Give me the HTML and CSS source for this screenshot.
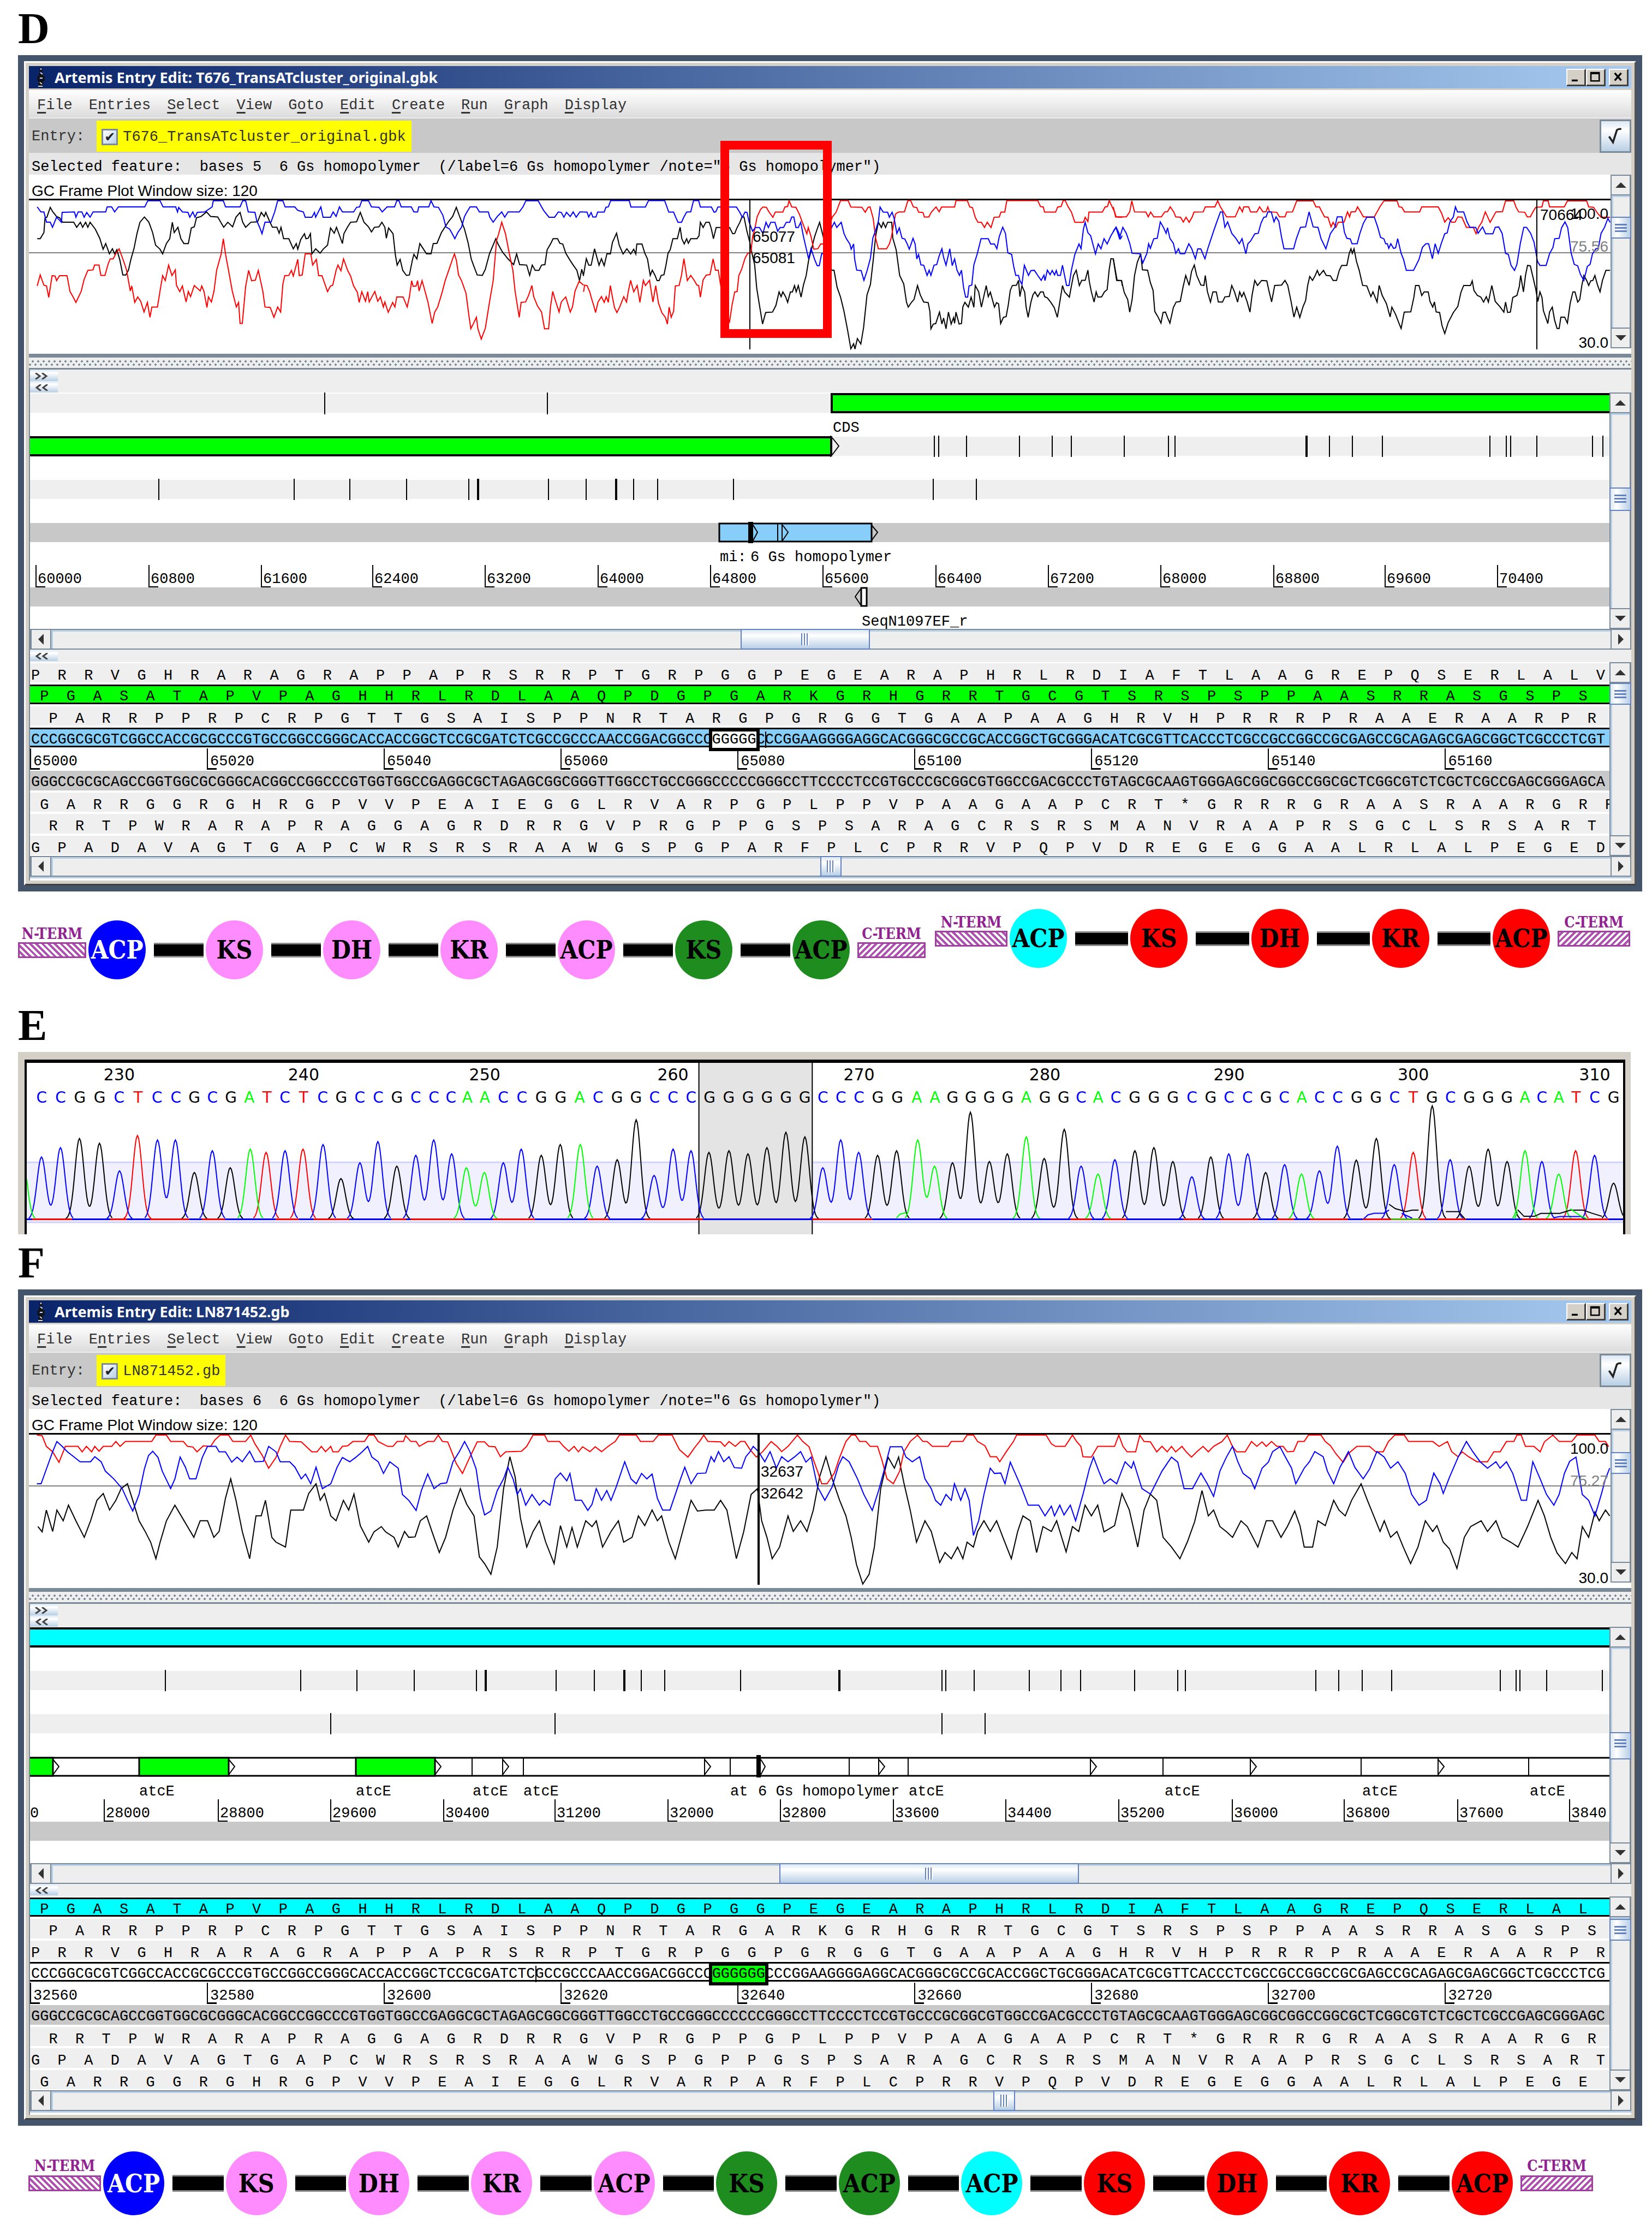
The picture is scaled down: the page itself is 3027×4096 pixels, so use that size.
FILE: index.html
```html
<!DOCTYPE html>
<html lang="en">
<head>
<meta charset="utf-8">
<title>Homopolymer comparison: T676 and LN871452</title>
<link rel="stylesheet" href="styles.css">
</head>
<body>
<svg width="0" height="0" class="defs" aria-hidden="true">
  <defs>
    <symbol id="helix" viewBox="0 0 16 36"><path d="M8 0v6M5 6h6M4 11l8 6M12 11l-8 6M3 17h10v6H3zM4 23l8 7M12 23l-8 7M3 31h8M5 35h6" fill="none" stroke="#111" stroke-width="3"/><path d="M8 1v3M7 9l4 3M6 19h5M6 27l4 3M3 34h8" fill="none" stroke="#ddd" stroke-width="2"/></symbol>
    <symbol id="up" viewBox="0 0 20 10"><path d="M0 10 10 0l10 10z" fill="#333"/></symbol>
    <symbol id="down" viewBox="0 0 20 10"><path d="M0 0h20L10 10z" fill="#333"/></symbol>
    <symbol id="left" viewBox="0 0 10 20"><path d="M10 0v20L0 10z" fill="#333"/></symbol>
    <symbol id="right" viewBox="0 0 10 20"><path d="M0 0v20l10-10z" fill="#333"/></symbol>
    <symbol id="more" viewBox="0 0 24 12"><path d="M1 0l8 6-8 6M13 0l8 6-8 6" fill="none" stroke="#444" stroke-width="3"/></symbol>
    <symbol id="less" viewBox="0 0 24 12"><path d="M11 0L3 6l8 6M23 0l-8 6 8 6" fill="none" stroke="#444" stroke-width="3"/></symbol>
  </defs>
</svg>
<main class="page">
<h2>D</h2>
<section class="win">
  <div class="frame">
    <header class="title">
      <svg class="helix"><use href="#helix"/></svg>
      <h3>Artemis Entry Edit: T676_TransATcluster_original.gbk</h3>
      <div class="winbtns">
        <button aria-label="Minimize"><svg viewBox="0 0 36 32"><path d="M9 23h13" stroke="#000" stroke-width="4"/></svg></button>
        <button aria-label="Maximize"><svg viewBox="0 0 36 32"><path d="M8 6h18v18H8z M8 8h18" fill="none" stroke="#000" stroke-width="3"/></svg></button>
        <button aria-label="Close"><svg viewBox="0 0 36 32"><path d="M10 7l14 16M24 7L10 23" stroke="#000" stroke-width="4"/></svg></button>
      </div>
    </header>
    <nav class="menu">
      <a href="#"><u>F</u>ile</a><a href="#">E<u>n</u>tries</a><a href="#"><u>S</u>elect</a><a href="#"><u>V</u>iew</a><a href="#">G<u>o</u>to</a><a href="#"><u>E</u>dit</a><a href="#"><u>C</u>reate</a><a href="#"><u>R</u>un</a><a href="#"><u>G</u>raph</a><a href="#"><u>D</u>isplay</a>
    </nav>
    <div class="entry">
      <span class="entry-label">Entry:</span>
      <label class="file"><input type="checkbox" checked>T676_TransATcluster_original.gbk</label>
      <button class="apply" aria-label="Apply"><svg viewBox="0 0 58 61"><path d="M16 31l8 12L32 18q3-3 9-2" fill="none" stroke="#222" stroke-width="4"/></svg></button>
    </div>
    <p class="selected">Selected feature:  bases 5  6 Gs homopolymer  (/label=6 Gs homopolymer /note="6 Gs homopolymer")</p>
    <div class="pane white">
      <svg class="plot" viewBox="0 0 2898 328">
        <text x="5" y="39">GC Frame Plot Window size: 120</text>
        <path class="mean" d="M0 143H2898"/>
        <path class="top" d="M0 45.500H2898"/>
        <g transform="matrix(.682 0 0 .4197 -53 -320)">
          <polyline class="k" points="100,1042 108,1042 118,1015 121,950 126,948 135,905 142,925 152,945 160,950 168,970 198,970 206,992 216,970 222,992 230,970 236,992 242,970 256,1000 268,1040 277,1088 284,1063 294,1108 302,1086 308,1108 314,1090 322,1135 330,1200 338,1200 345,1180 352,1130 360,1085 368,1020 376,970 388,947 400,970 410,1015 418,1070 430,1088 437,1108 447,1063 456,1042 463,970 468,1015 478,992 486,1042 494,1063 506,1063 514,995 522,990 528,950 540,945 555,925 566,945 585,947 593,970 601,992 612,970 625,990 634,948 645,927 652,970 660,992 674,970 692,968 702,927 710,945 714,927 724,965 732,992 744,992 750,1018 755,992 762,1042 776,1042 788,1086 796,1063 800,1088 808,1045 818,1020 822,1042 828,1040 834,1020 838,1108 848,1086 860,1105 868,1088 880,1070 888,995 898,1018 904,992 910,1018 920,1063 924,1020 934,990 942,970 958,968 968,927 978,970 990,990 998,1012 1006,992 1018,990 1026,970 1034,992 1038,1040 1044,995 1056,1020 1062,1110 1067,1157 1075,1132 1082,1180 1092,1202 1100,1200 1108,1135 1112,1110 1120,1130 1128,1063 1138,1088 1146,1108 1158,1108 1164,1063 1174,1062 1186,1015 1196,990 1206,965 1216,945 1226,905 1236,950 1248,1000 1258,1062 1266,1130 1272,1157 1282,1200 1296,1202 1304,1175 1315,1108 1332,1042 1338,1065 1350,1100 1365,1130 1380,1155 1388,1108 1396,1155 1415,1157 1423,1202 1430,1157 1438,1180 1448,1180 1455,1157 1464,1155 1470,1090 1480,1062 1486,1042 1498,1042 1504,1062 1512,1065 1520,1105 1530,1132 1540,1157 1550,1180 1557,1225 1563,1175 1568,1205"/>
          <polyline class="r" points="100,1248 108,1200 118,1245 125,1248 131,1298 140,1203 148,1205 152,1225 160,1203 180,1203 188,1272 196,1295 204,1320 218,1272 226,1220 236,1180 250,1178 254,1157 266,1157 271,1202 282,1202 290,1155 296,1130 304,1130 312,1105 320,1086 330,1130 340,1178 350,1270 354,1248 362,1320 370,1296 378,1315 387,1362 396,1320 403,1385 408,1340 423,1340 432,1250 437,1203 444,1225 453,1157 462,1203 471,1178 474,1245 483,1273 490,1248 500,1318 506,1272 512,1295 522,1246 538,1270 542,1248 548,1272 556,1342 560,1296 568,1318 575,1270 582,1180 594,1110 600,1042 606,1110 614,1180 624,1270 635,1340 641,1320 645,1412 651,1412 660,1250 668,1180 676,1225 686,1223 694,1180 700,1225 706,1270 712,1340 726,1342 736,1385 746,1340 754,1362 760,1240 765,1203 776,1202 783,1180 788,1205 800,1132 804,1203 812,1200 820,1108 835,1108 840,1157 850,1132 856,1203 865,1203 880,1273 888,1248 894,1245 903,1180 908,1157 916,1182 923,1130 934,1180 942,1205 950,1248 960,1275 965,1320 972,1273 982,1315 988,1273 992,1318 1007,1272 1015,1315 1022,1296 1030,1340 1034,1318 1043,1363 1055,1320 1061,1340 1066,1296 1083,1296 1094,1340 1100,1295 1106,1225 1110,1250 1118,1248 1122,1225 1126,1270 1134,1225 1142,1272 1150,1320 1161,1412 1168,1362 1176,1340 1188,1275 1196,1225 1206,1178 1216,1130 1221,1108 1226,1135 1232,1200 1240,1225 1252,1280 1260,1380 1265,1435 1272,1412 1280,1385 1284,1435 1293,1480 1304,1432 1315,1320 1325,1225 1334,1050 1340,1020 1348,970 1358,1020 1370,1120 1378,1180 1384,1272 1395,1385 1400,1320 1412,1318 1420,1290 1429,1246 1434,1295 1444,1335 1455,1362 1463,1435 1474,1435 1479,1340 1485,1272 1490,1300 1502,1362 1508,1318 1520,1296 1532,1362 1538,1340 1545,1270 1556,1228 1568,1245"/>
          <polyline class="b" points="100,903 110,925 118,925 125,970 135,970 141,992 152,948 165,970 167,927 200,925 204,948 210,925 220,925 226,948 233,927 242,948 250,925 284,925 288,903 300,903 308,925 318,903 389,903 397,876 430,876 438,903 472,903 477,925 480,905 490,925 505,927 510,948 518,925 524,948 530,927 550,925 570,903 573,876 600,876 606,903 645,903 652,876 660,876 667,925 685,927 690,965 697,990 704,1020 712,970 728,970 738,925 746,876 760,876 766,903 792,903 800,918 815,925 820,948 838,948 845,927 848,948 862,903 868,948 888,948 895,925 903,945 912,903 920,925 950,925 958,905 966,903 972,876 990,876 998,903 1018,905 1027,925 1040,903 1060,903 1066,876 1072,876 1078,903 1105,903 1112,925 1122,925 1125,903 1152,903 1158,876 1166,903 1178,905 1190,940 1198,990 1208,1000 1215,1020 1222,1042 1230,1015 1240,992 1248,945 1254,927 1263,903 1280,903 1288,925 1312,925 1316,948 1325,970 1336,945 1348,925 1356,948 1365,925 1395,925 1405,903 1413,876 1446,876 1455,903 1462,922 1475,948 1490,948 1500,925 1508,927 1515,948 1522,927 1532,945 1540,925 1548,948 1558,925 1568,925"/>
        </g>
        <g transform="matrix(.6295 0 0 .27418 1016.300 -89.700)">
          <polyline class="k" points="0,995 8,888 15,932 22,932 32,822 45,932 52,888 60,935 68,855 78,857 84,780 96,718 104,800 115,857 126,822 137,857 146,825 152,857 155,790 170,790 178,850 186,890 194,1000 200,965 208,1000 214,1035 220,1035 226,1000 234,995 240,930 246,850 252,830 260,755 273,755 281,678 286,755 293,790 300,755 305,785 312,755 330,755 336,735 340,645 348,680 356,645 366,645 372,690 378,755 386,680 425,680 434,722 440,720 446,685 455,645 461,610 467,610 475,700 484,780 490,850 498,930 504,1085 512,1200 521,1325 530,1248 550,1245 560,1200 569,1110 575,1142 580,1110 588,1142 594,1180 602,1110 608,1110 614,1068 619,1110 625,1068 633,1145 640,1065 648,1000 655,900 664,820 672,745 680,690 687,645 693,700 722,965 729,965 738,1080 748,1145 758,1240 768,1360 778,1490 786,1457 790,1492 797,1422 807,1458 815,1350 825,1130 835,1060 843,900 850,740 858,645 867,680 872,645 879,680 885,645 897,645 900,750 910,830 920,1000 932,1058 940,1180 945,1212 955,1178 962,1160 972,1068 980,1130 990,1178 1003,1182 1008,1240 1011,1357 1018,1325 1025,1322 1036,1245 1043,1325 1048,1285 1055,1357 1062,1245 1070,1325 1077,1282 1080,1320 1084,1245 1093,1325 1100,1322 1104,1210 1110,1180 1120,1212 1128,1145 1136,1213 1140,1068 1150,1110 1158,1212 1172,1068 1178,1142 1184,1112 1196,1212 1202,1182 1208,1190 1214,1322 1222,1280 1230,1275 1236,1200 1242,1100 1248,1068 1260,1066 1266,1033 1270,1142 1276,1070 1284,1112 1288,1210 1294,1280 1302,1180 1308,1130 1314,1110 1322,1142 1330,1110 1338,1110 1342,1142 1350,1150 1360,1180 1370,1215 1379,1280 1386,1180 1394,1068 1400,1110 1414,1145 1420,1070 1426,1000 1434,965 1443,1068 1450,1033 1460,1033 1468,965 1472,1040 1478,1110 1486,1178 1492,1110 1497,1145 1508,1143 1516,1110 1524,1095 1530,960 1535,888 1542,890 1548,970 1553,1033 1566,1035 1568,1068"/>
          <polyline class="r" points="0,1110 3,1065 10,1068 18,1110 22,1145 30,1205 35,1248 42,1178 52,1142 60,1180 66,1142 72,1180 78,1068 84,1145 90,1215 97,1248 105,1212 117,1142 125,1178 130,1110 137,1033 146,1110 156,1068 164,1180 174,1033 180,1068 192,1033 202,1178 210,1068 218,1185 228,1250 238,1280 244,1325 249,1212 255,1280 262,1240 267,1070 278,1068 285,1000 292,888 302,1035 312,1000 322,1033 330,1065 335,1068 340,1145 348,1030 357,998 368,995 377,890 384,965 392,965 400,1080 404,1200 425,1310 432,1200 440,1110 447,1108 452,1000 460,960 470,885 478,852 487,850 492,740 498,695 505,610 515,560 522,543 532,545 540,577 551,612 558,577 580,577 586,543 594,540 598,500 606,543 618,545 628,590 640,665 650,722 654,680 662,740 670,825 682,822 690,790 698,790 724,610 735,578 748,500 770,500 778,543 810,545 820,578 828,545 834,543 843,620 850,750 858,822 882,822 890,790 896,745 903,650 908,590 916,577 934,575 944,500 952,500 960,543 970,547 975,577 988,580 992,610 1005,610 1012,578 1026,543 1035,575 1042,543 1080,543 1084,500 1117,500 1124,543 1132,547 1140,612 1148,645 1158,645 1167,680 1175,645 1186,680 1195,612 1210,610 1215,577 1226,577 1232,500 1322,500 1330,540 1338,543 1342,577 1374,577 1380,543 1390,540 1396,500 1402,500 1410,540 1420,577 1430,645 1455,645 1460,612 1468,640 1471,577 1510,577 1518,543 1525,540 1530,500 1538,540 1546,577 1550,610 1568,612"/>
          <polyline class="b" points="0,577 10,577 15,610 22,580 27,610 36,610 41,577 60,577 65,545 72,542 79,500 133,500 138,543 180,543 189,500 236,500 248,577 262,577 268,610 275,645 285,645 292,610 300,577 312,575 320,500 335,500 340,543 372,543 380,578 385,575 391,543 445,543 455,580 462,612 470,577 476,580 482,645 492,705 500,680 512,680 522,720 531,645 538,680 545,645 557,645 565,705 572,680 582,680 590,645 600,645 606,610 612,610 618,680 625,680 632,645 640,740 648,820 655,890 662,820 672,890 680,935 686,935 693,855 700,853 722,680 730,645 737,680 750,645 758,720 765,755 775,790 779,825 786,790 789,890 795,965 808,968 816,1033 825,970 835,885 842,750 850,700 858,640 863,543 872,577 885,578 890,612 898,578 904,620 912,720 919,682 927,752 935,757 942,790 948,825 955,780 959,752 965,790 970,890 975,860 982,930 990,932 1000,1000 1006,965 1011,1000 1020,932 1028,928 1035,870 1043,822 1048,880 1055,932 1066,822 1073,935 1080,890 1087,965 1094,1000 1100,965 1106,1080 1112,1145 1118,1145 1122,1070 1130,1065 1136,930 1146,855 1157,755 1178,755 1185,790 1196,790 1203,822 1210,740 1220,678 1228,720 1235,850 1246,860 1252,940 1258,1000 1266,1000 1270,1035 1276,1060 1283,932 1295,1000 1302,968 1312,966 1322,1000 1332,1033 1340,998 1343,1035 1350,965 1358,995 1364,967 1371,997 1376,967 1380,1000 1388,1000 1394,932 1400,1000 1406,1068 1413,1068 1420,965 1430,860 1442,790 1448,822 1455,690 1460,645 1468,715 1476,735 1490,857 1498,790 1506,822 1515,755 1524,790 1535,735 1550,678 1558,715 1563,755 1568,735"/>
        </g>
        <g transform="matrix(.6295 0 0 .3672 1986.800 -237.750)">
          <polyline class="k" points="0,1065 5,1120 10,1175 24,1175 32,1235 42,1270 48,1333 55,1270 62,1150 70,1085 80,1042 85,1122 100,1124 108,1185 116,1225 121,1330 130,1356 139,1388 145,1335 152,1333 158,1360 165,1388 175,1310 183,1283 195,1280 203,1210 211,1150 216,1175 221,1200 228,1130 236,1098 243,1150 255,1198 264,1200 268,1150 274,1230 283,1283 290,1232 300,1232 306,1283 318,1283 325,1257 338,1255 345,1200 353,1232 362,1283 368,1232 374,1257 380,1235 390,1283 398,1333 404,1250 412,1175 420,1200 432,1175 447,1177 453,1225 461,1282 470,1200 490,1198 500,1175 508,1200 518,1283 526,1358 534,1308 543,1360 552,1308 560,1275 566,1200 572,1155 580,1175 588,1150 594,1125 600,1150 612,1125 620,1150 632,1152 640,1175 650,1175 658,1125 665,1100 680,1100 687,1040 692,1017 696,1040 701,1017 708,1080 716,1125 726,1200 738,1202 750,1256 756,1232 768,1283 774,1200 783,1250 795,1290 806,1357 811,1308 822,1345 832,1390 838,1415 847,1333 866,1332 875,1260 880,1200 890,1200 898,1250 905,1232 917,1232 922,1280 930,1308 935,1282 940,1332 950,1335 957,1400 965,1440 975,1385 990,1335 1003,1305 1012,1235 1020,1200 1040,1200 1045,1177 1050,1225 1060,1250 1070,1258 1078,1283 1086,1256 1092,1283 1102,1200 1112,1280 1125,1305 1137,1333 1142,1283 1148,1335 1156,1333 1163,1260 1175,1250 1182,1205 1186,1150 1194,1232 1200,1150 1206,1100 1214,1102 1222,1160 1230,1220 1236,1280 1242,1232 1248,1260 1252,1325 1265,1390 1270,1332 1278,1308 1285,1375 1292,1415 1298,1415 1303,1358 1314,1358 1322,1388 1330,1290 1338,1232 1344,1232 1352,1283 1358,1270 1364,1200 1370,1150 1378,1175 1384,1200 1390,1177 1396,1175 1402,1150 1410,1200 1417,1232 1424,1175 1434,1125 1446,1125"/>
          <polyline class="r" points="0,808 7,858 38,858 48,833 54,778 62,833 95,834 102,858 109,834 118,858 140,858 150,833 158,832 166,808 176,833 182,858 196,860 204,884 212,860 221,885 230,858 235,834 262,833 268,808 296,808 304,778 312,808 320,830 330,858 355,858 368,808 376,833 380,808 394,808 400,833 418,833 426,808 436,833 445,832 450,808 455,833 476,835 484,858 500,858 505,834 522,833 534,778 582,778 590,808 600,808 615,858 625,860 634,908 640,885 648,910 655,885 672,884 682,833 688,858 692,833 705,832 711,808 720,833 728,858 760,858 768,833 776,808 788,778 826,778 832,808 840,810 848,833 892,833 898,808 946,808 956,840 965,884 975,862 985,885 995,884 1003,858 1015,860 1028,910 1048,910 1056,942 1064,908 1073,884 1083,833 1090,858 1097,885 1106,858 1114,833 1133,832 1142,778 1166,778 1172,808 1180,833 1198,835 1205,858 1214,858 1222,832 1230,810 1248,808 1252,778 1266,778 1270,808 1313,808 1322,778 1378,778 1384,808 1398,810 1410,840 1420,860 1446,860"/>
          <polyline class="b" points="0,930 8,910 18,965 28,910 38,940 48,990 55,1040 78,1042 86,1088 98,1040 103,992 108,1015 118,967 128,965 137,883 146,910 154,940 158,912 165,965 175,990 182,1040 190,1017 195,1042 208,1042 220,992 228,1015 239,1067 246,1017 255,1018 267,1067 275,1018 290,940 300,890 312,833 318,833 325,910 333,883 345,940 357,965 367,992 375,967 386,1042 392,992 400,978 412,942 422,940 430,890 438,860 445,858 450,833 460,833 468,883 474,858 482,880 490,960 497,1017 525,1017 533,967 545,910 560,908 570,833 582,908 596,910 605,967 619,1017 632,942 645,910 652,858 666,858 673,935 680,965 690,968 695,992 710,992 718,940 728,890 738,860 760,860 770,910 778,960 788,968 793,992 798,992 802,1015 808,992 816,1015 822,1012 828,967 838,1040 845,1070 853,1125 874,1125 882,1098 890,1070 900,1010 910,992 918,992 929,1067 937,992 946,1040 955,990 965,942 972,938 980,883 990,858 996,808 1002,833 1020,833 1030,883 1038,910 1055,910 1062,940 1075,908 1084,942 1105,942 1112,910 1122,908 1132,940 1142,1040 1150,1045 1158,1100 1168,1125 1175,1095 1185,990 1195,910 1203,910 1215,940 1225,985 1235,1080 1242,1100 1260,1100 1270,1042 1280,1010 1285,967 1298,965 1305,912 1315,883 1323,912 1333,1040 1342,1095 1352,1102 1360,1145 1370,1175 1380,1105 1388,1095 1395,1042 1405,1017 1412,1015 1420,940 1430,910 1440,865 1446,885"/>
        </g>
        <path class="cursor" d="M1321 47V320M2763 47V320"/>
        <text x="1326" y="123">65077</text><text x="1326" y="162">65081</text><text x="2769" y="83">70664</text>
        <text class="end" x="2894" y="81">100.0</text><text class="end dim" x="2894" y="141">75.56</text><text class="end" x="2894" y="317">30.0</text>
      </svg>
      <div class="vbar"><button aria-label="Up"><svg><use href="#up"/></svg></button><div class="track"><i style="top:16%;height:40px"></i></div><button aria-label="Down"><svg><use href="#down"/></svg></button></div>
    </div>
    <div class="split"></div>
    <div class="body">
      <div class="strip"><button aria-label="Expand"><svg><use href="#more"/></svg></button><button aria-label="Collapse"><svg><use href="#less"/></svg></button></div>
      <div class="pane">
        <svg class="genes" viewBox="0 0 2894 433">
          <path class="band" d="M0 2h2894v35H0zM0 81h2894v35H0zM0 160h2894v35H0z"/>
          <path class="strand" d="M0 239h2894v35H0zM0 357h2894v35H0z"/>
          <path class="stop" d="M540 0v40M948 0v40M1657 79v39M1665 79v39M1716 79v39M1813 79v39M1873 79v39M1908 79v39M2005 79v39M2086 79v39M2098 79v39M2338 79v39M2340 79v39M2381 79v39M2423 79v39M2478 79v39M2675 79v39M2705 79v39M2713 79v39M2761 79v39M2863 79v39M2882 79v39M236 158v39M484 158v39M586 158v39M690 158v39M804 158v39M820 158v39M822 158v39M950 158v39M1019 158v39M1073 158v39M1075 158v39M1106 158v39M1150 158v39M1289 158v39M1655 158v39M1734 158v39"/>
          <path class="cds" d="M1469 3h1430v33h-1430zM-5 82h1473v33H-5z"/>
          <path class="arrow" d="M1467 79v39M1470 83l12 15-12 16"/>
          <path class="misc" d="M1263 240h279v33h-279z"/>
          <path class="arrow" d="M1370 240v33M1378 240v33M1325 243l8 13-8 15M1379 243l10 13-10 15M1542 243l11 13-11 15"/>
          <path class="pick" d="M1316 237h9v39h-9z"/>
          <path class="primer" d="M1523 358h10v33h-10z"/><path class="arrow" d="M1522 360l-10 14 10 15"/>
          <text x="1471" y="72">CDS</text><text x="1264" y="309">mi:</text><text x="1320" y="309">6 Gs homopolymer</text><text x="1524" y="427">SeqN1097EF_r</text>
          <path class="scale" d="M11 316v40h17M218 316v40h17M424 316v40h17M628 316v40h17M834 316v40h17M1041 316v40h17M1247 316v40h17M1453 316v40h17M1660 316v40h17M1866 316v40h17M2072 316v40h17M2279 316v40h17M2483 316v40h17M2689 316v40h17"/>
          <g><text x="14" y="349">60000</text><text x="221" y="349">60800</text><text x="427" y="349">61600</text><text x="631" y="349">62400</text><text x="837" y="349">63200</text><text x="1044" y="349">64000</text><text x="1250" y="349">64800</text><text x="1456" y="349">65600</text><text x="1663" y="349">66400</text><text x="1869" y="349">67200</text><text x="2075" y="349">68000</text><text x="2282" y="349">68800</text><text x="2486" y="349">69600</text><text x="2692" y="349">70400</text></g>
        </svg>
        <div class="vbar"><button aria-label="Up"><svg><use href="#up"/></svg></button><div class="track"><i style="top:38%;height:43px"></i></div><button aria-label="Down"><svg><use href="#down"/></svg></button></div>
      </div>
      <div class="hbar"><button aria-label="Left"><svg><use href="#left"/></svg></button><div class="track"><i style="left:44.200%;width:8.300%"></i></div><button aria-label="Right"><svg><use href="#right"/></svg></button></div>
      <div class="strip one"><button aria-label="Collapse"><svg><use href="#less"/></svg></button></div>
      <div class="pane">
        <div class="seq">
          <p class="aa">PRRVGHRARAGRAPPAPRSRRPTGRPGGPEGEARAPHRLRDIAFTLAAGREPQSERLALV</p>
          <p class="aa f1 green">PGASATAPVPAGHHRLRDLAAQPDGPGARKGRHGRRTGCGTSRSPSPPAASRRASGSPS</p>
          <p class="aa f2">PARRPPRPCRPGTTGSAISPPNRTARGPGRGGTGAAPAAGHRVHPRRRPRAAERAARPR</p>
          <p class="dna sky">CCCGGCGCGTCGGCCACCGCGCCCGTGCCGGCCGGGCACCACCGGCTCCGCGATCTCGCCGCCCAACCGGACGGCCC<mark>GGGGG</mark><b class="edge">C</b><b class="edge">C</b>CGGAAGGGGAGGCACGGGCGCCGCACCGGCTGCGGGACATCGCGTTCACCCTCGCCGCCGGCCGCGAGCCGCAGAGCGAGCGGCTCGCCCTCGT</p>
          <div class="ruler"><span>65000</span><span>65020</span><span>65040</span><span>65060</span><span>65080</span><span>65100</span><span>65120</span><span>65140</span><span>65160</span></div>
          <p class="dna comp">GGGCCGCGCAGCCGGTGGCGCGGGCACGGCCGGCCCGTGGTGGCCGAGGCGCTAGAGCGGCGGGTTGGCCTGCCGGGCCCCCGGGCCTTCCCCTCCGTGCCCGCGGCGTGGCCGACGCCCTGTAGCGCAAGTGGGAGCGGCGGCCGGCGCTCGGCGTCTCGCTCGCCGAGCGGGAGCA</p>
          <p class="aa f1">GARRGGRGHRGPVVPEAIEGGLRVARPGPLPPVPAAGAAPCRT*GRRRGRAASRAARGRR</p>
          <p class="aa f2">RRTPWRARAPRAGGAGRDRRGVPRGPPGSPSARAGCRSRSMANVRAAPRSGCLSRSART</p>
          <p class="aa">GPADAVAGTGAPCWRSRSRAAWGSPGPARFPLCPRRVPQPVDREGEGGAALRLALPEGED</p>
        </div>
        <div class="vbar"><button aria-label="Up"><svg><use href="#up"/></svg></button><div class="track"><i style="top:0;height:40px"></i></div><button aria-label="Down"><svg><use href="#down"/></svg></button></div>
      </div>
      <div class="hbar"><button aria-label="Left"><svg><use href="#left"/></svg></button><div class="track"><i style="left:49.300%;width:1.400%"></i></div><button aria-label="Right"><svg><use href="#right"/></svg></button></div>
      <div class="foot"></div>
    </div>
  </div>
  <div class="callout"></div>
</section>

<div class="pair">
  <div class="chain one">
    <span class="term n">N-TERM</span>
    <b class="dom blue">ACP</b><hr><b class="dom pink">KS</b><hr><b class="dom pink">DH</b><hr><b class="dom pink">KR</b><hr><b class="dom pink">ACP</b><hr><b class="dom leaf">KS</b><hr><b class="dom leaf">ACP</b>
    <span class="term c">C-TERM</span>
  </div>
  <div class="chain two">
    <span class="term n">N-TERM</span>
    <b class="dom aqua">ACP</b><hr><b class="dom red">KS</b><hr><b class="dom red">DH</b><hr><b class="dom red">KR</b><hr><b class="dom red">ACP</b>
    <span class="term c">C-TERM</span>
  </div>
</div>

<h2>E</h2>
<section class="chroma">
  <div class="chroma-in">
    <svg id="traces" viewBox="26 338 1514 936" preserveAspectRatio="none">
      <rect x="26" y="878" width="1514" height="334" fill="#f0f0ff"/>
      <path d="M26 881H1540M26 1209H1540" stroke="#d0d0ff" stroke-width="8"/>
      <rect x="663" y="330" width="108" height="950" fill="#e4e4e4"/>
      <path class="t" d="M663.500 330V1280M771 330V1280" stroke="#000"/>
    </svg>
    <div id="bases"></div>
  </div>
</section>

<h2>F</h2>
<section class="win">
  <div class="frame">
    <header class="title">
      <svg class="helix"><use href="#helix"/></svg>
      <h3>Artemis Entry Edit: LN871452.gb</h3>
      <div class="winbtns">
        <button aria-label="Minimize"><svg viewBox="0 0 36 32"><path d="M9 23h13" stroke="#000" stroke-width="4"/></svg></button>
        <button aria-label="Maximize"><svg viewBox="0 0 36 32"><path d="M8 6h18v18H8z M8 8h18" fill="none" stroke="#000" stroke-width="3"/></svg></button>
        <button aria-label="Close"><svg viewBox="0 0 36 32"><path d="M10 7l14 16M24 7L10 23" stroke="#000" stroke-width="4"/></svg></button>
      </div>
    </header>
    <nav class="menu">
      <a href="#"><u>F</u>ile</a><a href="#">E<u>n</u>tries</a><a href="#"><u>S</u>elect</a><a href="#"><u>V</u>iew</a><a href="#">G<u>o</u>to</a><a href="#"><u>E</u>dit</a><a href="#"><u>C</u>reate</a><a href="#"><u>R</u>un</a><a href="#"><u>G</u>raph</a><a href="#"><u>D</u>isplay</a>
    </nav>
    <div class="entry">
      <span class="entry-label">Entry:</span>
      <label class="file"><input type="checkbox" checked>LN871452.gb</label>
      <button class="apply" aria-label="Apply"><svg viewBox="0 0 58 61"><path d="M16 31l8 12L32 18q3-3 9-2" fill="none" stroke="#222" stroke-width="4"/></svg></button>
    </div>
    <p class="selected">Selected feature:  bases 6  6 Gs homopolymer  (/label=6 Gs homopolymer /note="6 Gs homopolymer")</p>
    <div class="pane white">
      <svg class="plot" viewBox="0 0 2898 328">
        <text x="5" y="39">GC Frame Plot Window size: 120</text>
        <path class="mean" d="M0 141H2898"/>
        <path class="top" d="M0 45.500H2898"/>
        <g transform="matrix(1.9303 0 0 .3567 -53 -228.600)">
          <polyline class="k" points="36,1245 40,1272 44,1160 50,1270 54,1160 60,1215 65,1135 72,1215 80,1300 86,1215 92,1110 98,1075 104,1160 110,1110 115,1050 121,1025 126,1110 132,1215 138,1272 143,1325 148,1410 152,1325 158,1215 166,1135 172,1190 178,1245 184,1300 190,1215 197,1215 203,1300 208,1270 214,1100 219,1000 224,1110 230,1270 237,1410 243,1190 248,1190 252,1110 258,1300 262,1325 271,1350 276,1160 288,1160 293,1075 300,1025 304,1110 308,1075 314,1190 319,1215 326,1110 331,1160 336,1078 342,1240 350,1325 355,1272 362,1245 366,1272 374,1300 378,1350 384,1270 388,1300 394,1298 399,1215 405,1190 410,1270 417,1378 423,1300 430,1160 437,1050 443,1130 450,1190 455,1400 460,1435 466,1490 472,1350 478,1050 484,886 489,990 494,1200 500,1350 506,1270 512,1215 518,1325 526,1435 532,1240 538,1350 543,1250 548,1350 556,1215 562,1245 566,1215 572,1350 580,1270 587,1215 592,1325 600,1300 606,1190 612,1240 619,1160 624,1215 628,1190 635,1325 641,1410 648,1270 656,1110 662,1165 670,1160 678,1160 684,1110 690,1160 699,1410 706,1270 713,1080 719,1050 723,1215 728,1300 733,1410 740,1350 748,1190 753,1270 760,1215 766,1270 772,1160 778,990 784,886 790,1000 797,1110 803,1190 808,1300 813,1440 819,1540 825,1490 830,1350 836,1050 843,888 849,945 853,888 858,1020 864,1160 870,1325 878,1215 884,1270 892,1430 897,1378 903,1410 909,1350 914,1410 918,1325 924,1350 928,1270 934,1215 940,1270 946,1215 952,1300 960,1410 966,1270 971,1190 978,1215 984,1378 990,1245 998,1270 1003,1215 1012,1375 1018,1245 1024,1270 1030,1135 1036,1190 1042,1135 1048,1272 1058,1240 1065,1075 1072,1160 1080,1350 1086,1160 1092,1078 1098,1110 1104,1300 1112,1350 1120,1410 1127,1325 1134,1220 1141,1060 1147,1190 1152,1160 1158,1245 1164,1270 1170,1300 1178,1215 1184,1245 1194,1350 1202,1215 1208,1215 1216,1300 1222,1245 1229,1165 1234,1240 1238,1350 1246,1350 1251,1215 1258,1240 1266,1110 1271,1160 1277,1190 1283,1110 1292,1025 1298,1110 1304,1190 1310,1270 1314,1215 1320,1300 1326,1270 1332,1350 1339,1435 1346,1350 1353,1215 1360,1270 1364,1240 1370,1325 1376,1360 1383,1460 1390,1300 1396,1245 1406,1215 1412,1270 1420,1215 1426,1300 1434,1325 1441,1350 1450,1245 1460,1110 1466,1190 1472,1300 1478,1380 1486,1435 1492,1378 1497,1410 1502,1245 1508,1300 1514,1170 1518,1215 1524,1160 1528,1190"/>
          <polyline class="r" points="35,775 40,778 44,833 50,861 56,915 62,833 74,833 78,861 82,833 87,861 90,833 94,858 98,833 106,833 110,808 114,833 119,808 144,808 148,775 158,775 162,808 174,808 178,833 183,836 187,861 193,830 200,833 204,800 209,775 217,775 221,808 233,808 238,775 242,820 249,880 255,945 262,890 266,833 271,775 275,808 286,810 296,861 301,861 305,833 309,860 314,833 316,861 321,861 325,833 330,830 335,808 346,808 350,775 355,775 359,808 368,833 373,833 377,808 383,808 385,778 390,808 395,808 398,833 406,808 412,808 416,775 420,808 425,810 428,850 433,920 439,972 445,900 453,810 460,810 464,833 470,835 475,886 480,861 495,858 500,833 506,775 517,775 520,808 531,808 535,833 540,858 545,833 549,861 553,835 560,860 565,835 571,860 578,830 584,808 588,775 604,775 608,808 620,808 625,775 638,775 641,808 645,850 653,888 660,835 664,808 668,775 672,808 684,810 688,833 692,808 698,833 703,808 707,808 712,850 718,888 724,860 732,808 738,835 742,860 748,833 757,775 762,808 768,835 772,900 776,960 780,1025 785,1025 792,970 797,890 803,808 808,775 812,775 816,808 822,808 826,833 833,833 837,900 842,1000 848,1025 854,960 858,861 864,808 871,775 876,808 880,808 885,833 900,833 903,808 914,808 918,775 924,775 928,808 935,830 940,886 946,886 949,912 955,862 962,808 965,775 993,775 998,820 1002,833 1011,833 1018,775 1022,808 1026,833 1028,886 1036,888 1042,833 1058,833 1062,775 1066,833 1070,861 1078,861 1082,775 1086,808 1092,810 1098,861 1103,833 1108,861 1112,833 1116,861 1122,833 1126,861 1131,888 1136,861 1142,833 1147,861 1152,833 1160,808 1165,775 1170,835 1174,861 1182,861 1188,808 1193,833 1198,810 1202,833 1207,808 1212,833 1218,833 1222,861 1228,858 1232,808 1238,808 1242,775 1254,775 1258,808 1263,830 1268,870 1275,915 1280,870 1288,833 1300,833 1306,861 1313,861 1318,808 1324,775 1333,775 1337,808 1360,808 1366,833 1374,808 1378,860 1384,886 1388,861 1394,886 1402,912 1412,912 1418,861 1424,861 1430,808 1437,808 1440,775 1444,775 1448,833 1456,833 1462,861 1466,810 1474,775 1480,808 1492,808 1497,775 1514,775 1518,808 1524,808 1527,835"/>
          <polyline class="b" points="35,1025 39,1025 44,950 50,860 54,808 59,833 64,861 70,886 76,912 86,912 90,886 96,912 100,960 108,1000 116,1050 121,1110 126,1165 132,1080 137,950 141,880 145,858 150,890 154,960 162,1050 166,1000 171,888 176,940 180,1000 186,1000 192,890 197,833 205,833 208,861 214,861 220,914 225,888 230,912 237,858 242,912 250,910 255,833 262,861 266,912 275,912 280,940 286,1000 290,975 295,1025 300,940 306,1050 314,1025 320,940 325,890 332,912 338,888 344,860 349,833 353,888 359,912 364,972 370,912 378,945 382,1080 388,1110 395,1162 400,1060 406,975 412,1050 418,1025 424,1020 430,912 436,860 441,808 446,860 452,950 456,1100 460,1185 466,1165 472,1060 478,1000 482,940 487,1000 491,1080 494,1050 499,1135 505,1080 512,1135 516,1110 522,1135 527,1000 532,970 538,1010 541,972 546,1110 552,1110 558,1162 562,1130 566,1050 571,1110 576,1060 580,1110 585,1040 593,912 599,1000 604,1025 609,972 614,1000 619,975 624,1100 629,1160 636,1160 641,1080 646,1000 650,940 656,1025 662,972 670,970 675,886 678,912 682,860 687,912 692,886 697,942 704,945 708,886 712,860 715,833 720,860 726,912 731,860 737,945 742,886 748,912 754,888 760,860 765,914 770,888 776,1040 783,1110 790,1040 796,930 800,886 806,912 814,1000 820,1080 828,1162 834,1060 840,940 845,835 856,835 860,888 866,912 873,886 878,1000 884,1050 888,1110 893,1135 898,1080 903,1110 906,1025 912,1110 916,1050 920,1110 924,1290 929,1215 934,1080 940,945 944,972 950,970 954,1025 959,914 966,1000 970,1050 976,1135 986,1135 992,1190 998,1140 1001,1190 1006,1135 1010,1185 1016,1135 1021,1215 1028,1080 1034,950 1038,888 1043,960 1048,1025 1054,1000 1060,1025 1068,912 1074,945 1076,912 1084,1050 1092,1078 1097,1025 1103,960 1112,888 1118,914 1124,1050 1132,1050 1140,970 1146,1025 1152,1090 1158,960 1164,890 1170,833 1175,912 1180,972 1187,1000 1191,1050 1198,945 1204,914 1208,860 1215,835 1220,886 1226,945 1230,1025 1238,945 1243,912 1248,860 1256,886 1260,960 1266,1025 1272,940 1280,860 1286,940 1294,1000 1300,950 1307,860 1314,888 1320,945 1327,912 1334,972 1340,1080 1347,1135 1354,1110 1361,970 1367,1025 1370,1075 1376,990 1384,890 1392,808 1398,860 1405,912 1412,945 1420,912 1424,945 1430,912 1436,972 1444,1110 1449,1110 1455,912 1462,1000 1468,1080 1475,1135 1480,1080 1485,972 1490,910 1496,888 1502,1080 1508,1110 1514,1190 1520,1080 1524,1000 1528,945"/>
        </g>
        <path class="cursor thick" d="M1337 47V322"/>
        <text x="1341" y="124">32637</text><text x="1341" y="164">32642</text>
        <text class="end" x="2894" y="82">100.0</text><text class="end dim" x="2894" y="141">75.27</text><text class="end" x="2894" y="319">30.0</text>
      </svg>
      <div class="vbar"><button aria-label="Up"><svg><use href="#up"/></svg></button><div class="track"><i style="top:17%;height:40px"></i></div><button aria-label="Down"><svg><use href="#down"/></svg></button></div>
    </div>
    <div class="split"></div>
    <div class="body">
      <div class="strip"><button aria-label="Expand"><svg><use href="#more"/></svg></button><button aria-label="Collapse"><svg><use href="#less"/></svg></button></div>
      <div class="pane">
        <svg class="genes" viewBox="0 0 2894 433">
          <path class="band" d="M0 81h2894v35H0zM0 160h2894v35H0z"/>
          <path class="strand" d="M0 357h2894v35H0z"/>
          <path class="orf" d="M-5 3h2910v33H-5z"/>
          <path class="stop" d="M248 79v39M496 79v39M599 79v39M704 79v39M818 79v39M834 79v39M836 79v39M964 79v39M1034 79v39M1088 79v39M1090 79v39M1120 79v39M1163 79v39M1302 79v39M1482 79v39M1484 79v39M1671 79v39M1678 79v39M1730 79v39M1831 79v39M1889 79v39M1925 79v39M2024 79v39M2103 79v39M2117 79v39M2356 79v39M2398 79v39M2441 79v39M2495 79v39M2694 79v39M2723 79v39M2730 79v39M2779 79v39M2881 79v39M551 158v39M962 158v39M1671 158v39M1750 158v39"/>
          <path class="primer" d="M-5 240h2910v33H-5z"/>
          <path class="cds thin" d="M-5 240h47v33H-5zM200 240h164v33H200zM597 240h145v33H597z"/>
          <path class="arrow" d="M42 243l11 13-11 15M364 243l11 13-11 15M742 243l11 13-11 15M866 240v33M866 243l11 13-11 15M1236 240v33M1236 243l11 13-11 15M1339 243l8 13-8 15M1555 240v33M1555 243l11 13-11 15M1943 240v33M1943 243l11 13-11 15M2236 240v33M2236 243l11 13-11 15M2580 240v33M2580 243l11 13-11 15M810 240v33M904 240v33M1283 240v33M1501 240v33M1609 240v33M2076 240v33M2439 240v33M2746 240v33"/>
          <path class="pick" d="M1331 235h8v41h-8z"/>
          <text x="200" y="309">atcE</text><text x="597" y="309">atcE</text><text x="811" y="309">atcE</text><text x="904" y="309">atcE</text><text x="1283" y="309">at</text><text x="1334" y="309">6 Gs homopolymer</text><text x="1610" y="309">atcE</text><text x="2079" y="309">atcE</text><text x="2441" y="309">atcE</text><text x="2748" y="309">atcE</text>
          <path class="scale" d="M136 316v40h17M345 316v40h17M551 316v40h17M758 316v40h17M962 316v40h17M1169 316v40h17M1375 316v40h17M1582 316v40h17M1788 316v40h17M1995 316v40h17M2203 316v40h17M2408 316v40h17M2616 316v40h17M2821 316v40h17"/>
          <g><text x="0" y="349">0</text><text x="139" y="349">28000</text><text x="348" y="349">28800</text><text x="554" y="349">29600</text><text x="761" y="349">30400</text><text x="965" y="349">31200</text><text x="1172" y="349">32000</text><text x="1378" y="349">32800</text><text x="1585" y="349">33600</text><text x="1791" y="349">34400</text><text x="1998" y="349">35200</text><text x="2206" y="349">36000</text><text x="2411" y="349">36800</text><text x="2619" y="349">37600</text><text x="2824" y="349">3840</text></g>
        </svg>
        <div class="vbar"><button aria-label="Up"><svg><use href="#up"/></svg></button><div class="track"><i style="top:43.500%;height:50px"></i></div><button aria-label="Down"><svg><use href="#down"/></svg></button></div>
      </div>
      <div class="hbar"><button aria-label="Left"><svg><use href="#left"/></svg></button><div class="track"><i style="left:46.700%;width:19.200%"></i></div><button aria-label="Right"><svg><use href="#right"/></svg></button></div>
      <div class="strip one"><button aria-label="Collapse"><svg><use href="#less"/></svg></button></div>
      <div class="pane">
        <div class="seq">
          <p class="aa f1 cyan">PGASATAPVPAGHHRLRDLAAQPDGPGGPEGEARAPHRLRDIAFTLAAGREPQSERLAL</p>
          <p class="aa f2">PARRPPRPCRPGTTGSAISPPNRTARGARKGRHGRRTGCGTSRSPSPPAASRRASGSPS</p>
          <p class="aa">PRRVGHRARAGRAPPAPRSRRPTGRPGGPGRGGTGAAPAAGHRVHPRRRPRAAERAARPR</p>
          <p class="dna white">CCCGGCGCGTCGGCCACCGCGCCCGTGCCGGCCGGGCACCACCGGCTCCGCGATCTC<b class="edge">G</b>CCGCCCAACCGGACGGCCC<mark class="lime">GGGGGG</mark>CCCGGAAGGGGAGGCACGGGCGCCGCACCGGCTGCGGGACATCGCGTTCACCCTCGCCGCCGGCCGCGAGCCGCAGAGCGAGCGGCTCGCCCTCG</p>
          <div class="ruler"><span>32560</span><span>32580</span><span>32600</span><span>32620</span><span>32640</span><span>32660</span><span>32680</span><span>32700</span><span>32720</span></div>
          <p class="dna comp">GGGCCGCGCAGCCGGTGGCGCGGGCACGGCCGGCCCGTGGTGGCCGAGGCGCTAGAGCGGCGGGTTGGCCTGCCGGGCCCCCCGGGCCTTCCCCTCCGTGCCCGCGGCGTGGCCGACGCCCTGTAGCGCAAGTGGGAGCGGCGGCCGGCGCTCGGCGTCTCGCTCGCCGAGCGGGAGC</p>
          <p class="aa f2">RRTPWRARAPRAGGAGRDRRGVPRGPPGPLPPVPAAGAAPCRT*GRRRGRAASRAARGR</p>
          <p class="aa">GPADAVAGTGAPCWRSRSRAAWGSPGPPGSPSARAGCRSRSMANVRAAPRSGCLSRSART</p>
          <p class="aa f1">GARRGGRGHRGPVVPEAIEGGLRVARPARFPLCPRRVPQPVDREGEGGAALRLALPEGE</p>
        </div>
        <div class="vbar"><button aria-label="Up"><svg><use href="#up"/></svg></button><div class="track"><i style="top:1%;height:40px"></i></div><button aria-label="Down"><svg><use href="#down"/></svg></button></div>
      </div>
      <div class="hbar"><button aria-label="Left"><svg><use href="#left"/></svg></button><div class="track"><i style="left:60.400%;width:1.400%"></i></div><button aria-label="Right"><svg><use href="#right"/></svg></button></div>
      <div class="foot"></div>
    </div>
  </div>
</section>

<div class="chain full">
  <span class="term n">N-TERM</span>
  <b class="dom blue">ACP</b><hr><b class="dom pink">KS</b><hr><b class="dom pink">DH</b><hr><b class="dom pink">KR</b><hr><b class="dom pink">ACP</b><hr><b class="dom leaf">KS</b><hr><b class="dom leaf">ACP</b><hr><b class="dom aqua">ACP</b><hr><b class="dom red">KS</b><hr><b class="dom red">DH</b><hr><b class="dom red">KR</b><hr><b class="dom red">ACP</b>
  <span class="term c">C-TERM</span>
</div>
</main>
<script src="figure.js"></script>
</body>
</html>
```

FILE: styles.css
```css
* { box-sizing: border-box; }
body { margin: 0; background: #fff; color: #000; }
.defs { position: absolute; }
.page { padding: 0 18px 36px 33px; }
h2 { margin: 0; height: 101px; font: bold 80px/104px "Liberation Serif", serif; }
button { margin: 0; padding: 0; border: 0; display: block; font: inherit; }
svg { display: block; }

/* application window */
.win { position: relative; border: 11px solid #44546a; font: 27px/30px "Liberation Mono", monospace; }
.frame { border: 3px solid #fff; border-right-color: #55534e; border-bottom-color: #404040; padding: 6px; background: #d4d0c8; }
.title { display: flex; align-items: center; height: 41px; margin-bottom: 3px; padding: 0 5px 0 14px; background: linear-gradient(90deg, #0a246a, #a6caf0); }
.helix { width: 16px; height: 36px; }
.title h3 { flex: 1; margin: 0 0 0 17px; color: #fff; font: bold 27px/36px "Noto Sans", sans-serif; }
.winbtns { display: flex; }
.winbtns button { width: 36px; height: 32px; background: #d4d0c8; border: 2px solid #fff; border-right: 3px solid #404040; border-bottom: 3px solid #404040; }
.winbtns button:last-child { margin-left: 6px; }
.winbtns svg { width: 100%; height: 100%; }
.menu { display: flex; gap: 30px; height: 52px; padding: 13px 15px 0; background: linear-gradient(#fff, #dcdcdc 50px, #eee 50px); }
.menu a { color: #333; text-decoration: none; }
.menu u { text-decoration-thickness: 3px; text-underline-offset: 5px; }
.entry { display: flex; align-items: center; height: 63px; padding: 2px 0 0 5px; background: #c8c8c8; color: #333; line-height: 34px; }
.entry-label { margin-right: 22px; }
.file { display: flex; align-items: center; height: 57px; padding: 2px 10px 0 9px; background: #ff0; }
.file input { appearance: none; width: 30px; height: 30px; margin: 0 9px 0 0; border: 3px solid #7a8a99; background: linear-gradient(135deg, #fff, #b8cfe5); display: grid; place-items: center; }
.file input:checked::before { content: "✔"; font: 24px/24px "DejaVu Sans", sans-serif; color: #222; }
.apply { width: 58px; height: 61px; margin-left: auto; border: 3px solid #7a8a99; background: linear-gradient(#dce8f3, #fff 30%, #b8cfe5); }
.apply svg { width: 100%; height: 100%; }
.selected { margin: 0; height: 40px; padding: 9px 5px 0; line-height: 34px; background: #e6e6e6; white-space: pre; overflow: hidden; }
.pane { display: flex; }
.pane.white { background: #fff; }
.pane.white .vbar { margin-bottom: 10px; }
.plot, .genes { flex: 1; min-width: 0; height: auto; background: #fff; overflow: hidden; }
.plot text { font: 28px "Liberation Sans", sans-serif; }
.plot .end { text-anchor: end; }
.plot .dim { fill: #808080; }
.plot polyline { fill: none; stroke-width: 2; vector-effect: non-scaling-stroke; }
.k { stroke: #000; }
.r { stroke: #f00; }
.b { stroke: #00f; }
.mean { stroke: #808080; stroke-width: 2; }
.top { stroke: #000; stroke-width: 3; }
.cursor { stroke: #000; stroke-width: 2; }
.cursor.thick { stroke-width: 4; }
.callout { position: absolute; left: 43.200%; top: 146px; width: 204px; height: 361px; border: 16px solid #f00; }
.split { height: 29px; border-top: 7px solid #7a8a99; border-bottom: 3px solid #7a8a99; background: radial-gradient(circle at 2px 2px, #7a8a99 2px, transparent 2px) 5px 5px / 10px 30px, radial-gradient(circle at 2px 2px, #7a8a99 2px, transparent 2px) 10px 11px / 10px 30px, #eee; }
.body { border-left: 2px solid #7a8a99; background: #eee; }
.strip { height: 42px; }
.strip.one { height: 23px; }
.strip button { width: 51px; height: 21px; padding: 3px 0 0 9px; background: linear-gradient(#dce8f3, #fff 30%, #b8cfe5); }
.strip svg { width: 24px; height: 12px; }

/* scroll bars */
.vbar { display: flex; flex-direction: column; width: 38px; border: 2px solid #7a8a99; border-right: 3px solid #7a8a99; background: #eee; }
.body .vbar { width: 40px; }
.vbar button { height: 34px; display: grid; place-items: center; background: #eee; }
.vbar button svg { width: 20px; height: 10px; }
.track { position: relative; flex: 1; border: 0 solid #7a8a99; }
.vbar .track { border-width: 2px 0; box-shadow: inset 3px 3px #b8cfe5; }
.track i { position: absolute; border: 2px solid #6382bf; }
.vbar i { left: -2px; right: -3px; background: linear-gradient(#6382bf, #6382bf) center 11px / 22px 3px no-repeat, linear-gradient(#6382bf, #6382bf) center 17px / 22px 3px no-repeat, linear-gradient(#6382bf, #6382bf) center 23px / 22px 3px no-repeat, linear-gradient(90deg, #dce8f3, #fff 30%, #b8cfe5); }
.hbar { display: flex; height: 38px; border: 2px solid #7a8a99; border-left: 3px solid #7a8a99; background: #eee; }
.hbar button { width: 34px; display: grid; place-items: center; background: #eee; }
.hbar button svg { width: 10px; height: 20px; }
.hbar .track { border-width: 0 2px; box-shadow: inset 3px 3px #b8cfe5; }
.hbar i { top: -2px; bottom: -2px; background: linear-gradient(90deg, #6382bf 2px, #fff 2px 5px, #6382bf 5px 7px, #fff 7px 10px, #6382bf 10px 12px, #fff 12px) center / 14px 22px no-repeat, linear-gradient(#dce8f3, #fff 30%, #b8cfe5); }

/* feature map */
.genes text { font: 27px "Liberation Mono", monospace; }
.band { fill: #efefef; }
.strand { fill: #c8c8c8; }
.stop { stroke: #000; stroke-width: 2; }
.cds { fill: #0f0; stroke: #000; stroke-width: 4; }
.cds.thin { stroke-width: 3; }
.orf { fill: #0ff; stroke: #000; stroke-width: 4; }
.misc { fill: #87cefa; stroke: #000; stroke-width: 3; }
.primer { fill: #fff; stroke: #000; stroke-width: 3; }
.arrow { fill: none; stroke: #000; stroke-width: 2; }
.scale { fill: none; stroke: #000; stroke-width: 2; }

/* sequence rows */
.seq { flex: 1; min-width: 0; display: grid; grid-template-rows: repeat(9, minmax(0, 1fr)); height: 355px; background: #fff; overflow: hidden; }
.seq p { margin: 2px 0; padding-left: 2px; line-height: 46px; white-space: pre; overflow: hidden; background: #efefef; }
.seq .f1 { padding-left: calc(1ch + 2px); }
.seq .f2 { padding-left: calc(2ch + 2px); }
.seq .green, .seq .cyan, .seq .sky, .seq .white { border: solid #000; border-width: 3px 0; margin: 2px 0; line-height: 39px; overflow: visible; }
.seq .green { background: #0f0; }
.seq .cyan { background: #0ff; }
.seq .sky { background: #87cefa; }
.seq .white { background: #fff; }
.seq .comp { background: #c8c8c8; line-height: 42px; }
.dna mark { background: #fff; outline: 6px solid #000; color: #000; }
.dna mark.lime { background: #0f0; }
.edge { font-weight: normal; box-shadow: inset 2px 0 #000; }
.ruler { display: flex; align-items: stretch; }
.ruler span { position: relative; flex: none; width: 20ch; padding-left: 4px; line-height: 48px; border-left: 2px solid #000; }
.ruler span::after { content: ""; position: absolute; left: 0; bottom: 0; width: 16px; height: 3px; background: #000; }
.foot { height: 7px; background: linear-gradient(#b8cfe5 3px, #fff 3px); }

/* domain chains */
.pair { display: flex; align-items: flex-start; gap: 17px; height: 193px; padding: 32px 22px 0 0; }
.chain { display: flex; align-items: center; --d: 105px; --h: 108px; }
.chain.one { flex: 1663; margin-top: 21px; }
.chain.two { flex: 1274; }
.chain.full { margin: 47px 90px 0 19px; --d: 112px; --h: 117px; }
.dom { flex: none; width: var(--d); height: var(--h); border-radius: 50%; display: grid; place-items: center; font: bold 46px/46px "DejaVu Serif Condensed", "DejaVu Serif", serif; }
.chain hr { flex: 1; height: 27px; margin: 0 4px 0 15px; border: 3px solid #888; border-width: 3px 0; background: #000; }
.chain.full hr { height: 31px; }
.blue { background: #00f; color: #fff; }
.pink { background: #ff8cff; }
.leaf { background: #1e8c1e; }
.aqua { background: #0ff; }
.red { background: #f00; }
.term { flex: none; width: 125px; height: var(--h); display: flex; flex-direction: column; justify-content: flex-end; padding-bottom: 39px; text-align: center; color: #912391; font: bold 27px/30px "DejaVu Serif Condensed", "DejaVu Serif", serif; }
.two .term, .full .term { width: 133px; }
.full .term { padding-bottom: 44px; line-height: 34px; }
.term::after { content: ""; height: 23px; border: 3px solid #a040a0; background: repeating-linear-gradient(45deg, #fff 0 4px, #b050b0 4px 8px); }
.term.c::after { background: repeating-linear-gradient(-45deg, #fff 0 4px, #b050b0 4px 8px); }
.term.n { margin-right: 4px; }
.term.c { margin-left: 14px; }

/* chromatogram */
.chroma { margin-right: 21px; padding: 14px 10px 0 12px; background: #d4d0c8; }
.chroma-in { display: grid; border: 4px solid #000; border-width: 6px 4px 0; background: #fff; }
.chroma-in > * { grid-area: 1 / 1; min-width: 0; }
#traces { width: 100%; height: 314px; }
#traces .t { fill: none; stroke-width: 2; vector-effect: non-scaling-stroke; }
#traces .base { stroke-width: 3; vector-effect: non-scaling-stroke; }
#bases { display: flex; align-items: flex-start; padding: 1px 0 0 10px; font: 28px/42px "DejaVu Sans", sans-serif; }
#bases span { flex: 1 1 0; width: 0; display: grid; grid-template-rows: 42px 42px; justify-content: center; }
#bases small { font-size: 30px; color: #000; justify-self: center; width: 0; display: flex; justify-content: center; }
#bases em { grid-row: 2; font-style: normal; justify-self: center; }
.A { color: #0f0; }
.C { color: #00f; }
.G { color: #000; }
.T { color: #f00; }
```

FILE: figure.js
```js
// Residues of a translated frame sit three bases apart.
document.querySelectorAll('.aa').forEach(function (row) {
  row.textContent = row.textContent.split('').join('  ');
});

// Called bases: letter, trace position, top of the peak.
var calls = 'C40:852 C58:801 G76:751 G95:777 C114:928 T131:735 C150:759 C167:759 G185:937 C202:818 G219:911 A238:809 T253:827 C271:818 T288:809 C307:784 G324:970 C342:884 C359:768 G377:902 C395:843 C412:759 C429:835 A443:911 A460:937 C478:884 C495:809 G514:843 G532:784 A551:784 C567:902 G586:867 G604:649 C621:953 C639:809 C656:818 G673:827 G692:818 G710:835 G728:801 G746:717 G764:742 C781:911 C798:759 C815:827 G833:843 G851:818 A871:759 A887:902 G904:884 G921:608 G939:877 G956:835 A974:742 G991:860 G1010:701 C1026:902 A1042:945 C1058:867 G1077:818 G1095:801 G1113:877 C1131:960 G1149:852 C1166:835 C1184:835 G1201:937 C1219:894 A1235:945 C1252:928 C1269:793 G1287:869 G1306:751 C1323:894 T1341:827 G1359:573 C1376:867 G1394:902 G1412:809 G1430:877 A1447:818 C1463:877 A1479:945 T1495:818 C1513:843 G1531:995'
  .split(' ').map(function (c) {
    var p = c.slice(1).split(':');
    return { base: c[0], x: +p[0], top: +p[1] };
  });

var FLOOR = 1192, SPREAD = 6;
var colour = { G: '#000', T: '#f00', C: '#00f', A: '#0f0' };
var svg = document.getElementById('traces');

function add(d, stroke, cls) {
  var p = document.createElementNS('http://www.w3.org/2000/svg', 'path');
  p.setAttribute('d', d);
  p.setAttribute('stroke', stroke);
  p.setAttribute('class', cls);
  svg.appendChild(p);
}

Object.keys(colour).forEach(function (base) {
  var peaks = calls.filter(function (c) { return c.base === base; });
  if (base === 'A') peaks = [{ x: 22, top: 850 }].concat(peaks);
  var d = '', open = false;
  for (var x = 26; x <= 1540; x += 1) {
    var h = 0;
    peaks.forEach(function (p) {
      h += (FLOOR - p.top) * Math.exp(-Math.pow((x - p.x) / SPREAD, 2));
    });
    if (h > 4) {
      d += (open ? 'L' : 'M') + x + ' ' + (FLOOR - h).toFixed(1);
      open = true;
    } else open = false;
  }
  add(d, colour[base], 't');
});

add('M26 1192H1540', '#f00', 'base');
add('M26 1192H31M69 1192H105M121 1192H143M180 1192H192M214 1192H262M284 1192H298M332 1192H372M386 1192H390M441 1192H468M508 1192H558M578 1192H612M667 1192H771M828 1192H1016M1036 1192H1048M1069 1192H1123M1141 1192H1158M1194 1192H1212M1228 1192H1243M1279 1192H1293M1352 1192H1364M1391 1192H1444M1526 1192H1540', '#00f', 'base');
add('M1294 1190L1298 1168 1304 1159H1313L1318 1142M1330 1160L1340 1186M1474 1184L1480 1177H1500L1504 1190', '#00f', 't');
add('M1318 1110L1324 1134 1334 1150 1340 1142H1346M1372 1150H1384L1390 1190M1440 1140L1446 1176H1456L1462 1160H1480L1490 1142H1502L1510 1158 1520 1176', '#000', 't');
add('M851 1185L854 1165 860 1155M1320 1192H1347M1437 1190L1440 1150M1490 1135L1500 1175 1506 1190', '#0f0', 't');

// Each letter's cell reaches halfway to its neighbours on the trace.
var row = document.getElementById('bases');
calls.forEach(function (c, i) {
  var before = i ? calls[i - 1].x : 22;
  var after = i < calls.length - 1 ? calls[i + 1].x : 1549;
  var cell = document.createElement('span');
  cell.style.flexGrow = (after - before) / 2;
  if (i % 10 === 4) {
    var n = document.createElement('small');
    n.textContent = 226 + i;
    cell.appendChild(n);
  }
  var letter = document.createElement('em');
  letter.className = c.base;
  letter.textContent = c.base;
  cell.appendChild(letter);
  row.appendChild(cell);
});
```
